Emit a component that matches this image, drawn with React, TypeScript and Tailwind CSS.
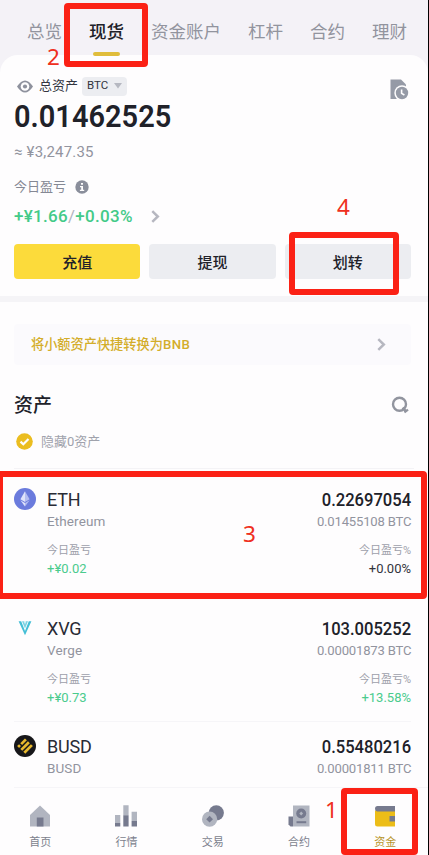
import type { ReactNode } from 'react';
import { clsx } from 'clsx';

const tabs = ['总览', '现货', '资金账户', '杠杆', '合约', '理财'];

interface Asset {
  symbol: string;
  name: string;
  amount: string;
  btc: string;
  pnl?: string;
  pnlPercent?: string;
  flat?: boolean;
  icon: ReactNode;
}

const assets: Asset[] = [
  {
    symbol: 'ETH',
    name: 'Ethereum',
    amount: '0.22697054',
    btc: '0.01455108 BTC',
    pnl: '+¥0.02',
    pnlPercent: '+0.00%',
    flat: true,
    icon: <EthIcon />,
  },
  {
    symbol: 'XVG',
    name: 'Verge',
    amount: '103.005252',
    btc: '0.00001873 BTC',
    pnl: '+¥0.73',
    pnlPercent: '+13.58%',
    icon: <VergeIcon />,
  },
  {
    symbol: 'BUSD',
    name: 'BUSD',
    amount: '0.55480216',
    btc: '0.00001811 BTC',
    icon: <BusdIcon />,
  },
];

const navItems = [
  { label: '首页', icon: <HomeIcon /> },
  { label: '行情', icon: <MarketIcon /> },
  { label: '交易', icon: <TradeIcon /> },
  { label: '合约', icon: <FuturesIcon /> },
  { label: '资金', icon: <WalletIcon />, active: true },
];

function EthIcon() {
  return (
    <svg width="22" height="22" viewBox="0 0 22 22">
      <circle cx="11" cy="11" r="11" fill="#6b7bdd" />
      <path d="M11 3.2 L6.4 11.2 L11 13.9Z" fill="#dfe3fa" />
      <path d="M11 3.2 L15.6 11.2 L11 13.9Z" fill="#b4bdf0" />
      <path d="M6.4 12.3 L11 18.5 V15Z" fill="#dfe3fa" />
      <path d="M15.6 12.3 L11 18.5 V15Z" fill="#b4bdf0" />
    </svg>
  );
}

function VergeIcon() {
  return (
    <svg width="22" height="22" viewBox="0 0 22 22">
      <path d="M4.6 4.2 H7.2 L11 14 L14.8 4.2 H17.4 L11 18.2Z" fill="#45bfd6" />
      <path d="M8 4.2 H14 L11 11.6Z" fill="#7dd3e3" />
      <path d="M10 4.2 H12 L11 7.5Z" fill="#fefdfe" />
    </svg>
  );
}

function BusdIcon() {
  return (
    <svg width="22" height="22" viewBox="0 0 22 22">
      <circle cx="11" cy="11" r="11" fill="#17171a" />
      <g stroke="#e8b92e" strokeWidth="2.7">
        <path d="M7.2 9.1 L11.9 4.4" />
        <path d="M7.3 14.9 L14.9 7.3" />
        <path d="M10.3 17.7 L17.9 10.1" />
        <path d="M4.1 12 L6 10.1" />
      </g>
    </svg>
  );
}

function HomeIcon() {
  return (
    <svg width="22" height="22" viewBox="0 0 22 22">
      <path d="M11 .5 L21 10 V21.5 H1 V10Z" fill="#b1b5c0" />
      <path d="M7.8 12.5 H14.5 V21.5 H7.8Z" fill="#767a8e" />
    </svg>
  );
}

function MarketIcon() {
  return (
    <svg width="22" height="22" viewBox="0 0 22 22">
      <path d="M0 10 H5.3 V18 H0Z M8.3 .3 H13.6 V10.3 H8.3Z M16.6 6.8 H22 V16 H16.6Z" fill="#b1b5c0" />
      <path d="M0 18 H5.3 V21.5 H0Z M8.3 10.3 H13.6 V21.5 H8.3Z M16.6 16 H22 V21.5 H16.6Z" fill="#767a8e" />
    </svg>
  );
}

function TradeIcon() {
  return (
    <svg width="22" height="22" viewBox="0 0 22 22">
      <circle cx="14.3" cy="7.8" r="7.6" fill="#767a8e" />
      <circle cx="7.6" cy="14.2" r="7.6" fill="#b1b5c0" />
      <path d="M7.6 10.8 L11 14.2 L7.6 17.6 L4.2 14.2Z" fill="#767a8e" />
    </svg>
  );
}

function FuturesIcon() {
  return (
    <svg width="22" height="22" viewBox="0 0 22 22">
      <path d="M5 .5 H21.5 V21.5 H5Z" fill="#b1b5c0" />
      <path d="M.5 11.5 H5 V21.5 H2.5 L.5 19.5Z" fill="#767a8e" />
      <circle cx="13.2" cy="8.5" r="5" fill="#767a8e" />
      <path d="M13.2 6.6 L15.1 8.5 L13.2 10.4 L11.3 8.5Z" fill="#b1b5c0" />
      <path d="M8.5 16.2 H18.2 V18.2 H8.5Z" fill="#767a8e" />
    </svg>
  );
}

function WalletIcon() {
  return (
    <svg width="22" height="22" viewBox="0 0 22 22">
      <path d="M1 5.5 H21 V21.5 H3.5 Q1 21.5 1 19Z" fill="#ecbd18" />
      <path d="M3.5 1 H21 V6.6 H3.2 Q1 6.2 1 3.8 Q1 1 3.5 1Z" fill="#767a8e" />
      <path d="M15.5 11 H21 V16.5 H15.5Z" fill="#767a8e" />
    </svg>
  );
}

function EyeIcon() {
  return (
    <svg width="16" height="13" viewBox="0 0 16 13">
      <path d="M0 6.5 Q4 .5 8 .5 Q12 .5 16 6.5 Q12 12.5 8 12.5 Q4 12.5 0 6.5Z" fill="#8e919d" />
      <circle cx="8" cy="6.5" r="4.3" fill="#fefdfe" />
      <circle cx="8" cy="6.5" r="2.1" fill="#8e919d" />
    </svg>
  );
}

function HistoryIcon() {
  return (
    <svg width="19" height="21" viewBox="0 0 19 21">
      <path d="M.5 .5 H11 L16 5.5 V20 H.5Z" fill="#959aa6" />
      <circle cx="12" cy="14" r="7.7" fill="#fefdfe" />
      <circle cx="12" cy="14" r="6.2" fill="#959aa6" />
      <path d="M11.6 10.5 V14.4 L14.4 16" stroke="#fefdfe" strokeWidth="1.6" fill="none" />
    </svg>
  );
}

function InfoIcon() {
  return (
    <svg width="14" height="14" viewBox="0 0 14 14">
      <circle cx="7" cy="7" r="6.7" fill="#8a8e9b" />
      <path d="M6 3 H8 V4.8 H6Z M5 6 H8 V9.7 H9.2 V11 H4.9 V9.7 H6.2 V7.2 H5Z" fill="#fefdfe" />
    </svg>
  );
}

function Chevron() {
  return (
    <svg width="9" height="13" viewBox="0 0 9 13">
      <path d="M1.3 1.2 L6.8 6.5 L1.3 11.8" fill="none" stroke="#b6b7c0" strokeWidth="2.5" />
    </svg>
  );
}

function SearchIcon() {
  return (
    <svg width="18" height="18" viewBox="0 0 18 18">
      <circle cx="8.5" cy="8.3" r="6.5" fill="none" stroke="#92959f" strokeWidth="2.4" />
      <path d="M11.6 11.6 L15.2 15.6" fill="none" stroke="#92959f" strokeWidth="2.6" />
      <path d="M13.4 16.4 L17 13.6" fill="none" stroke="#92959f" strokeWidth="2.2" />
    </svg>
  );
}

function CheckIcon() {
  return (
    <svg width="17" height="17" viewBox="0 0 17 17">
      <circle cx="8.5" cy="8.5" r="8.3" fill="#ebbd20" />
      <path d="M4.5 8.6 L7.3 11.3 L12.5 6" fill="none" stroke="#fefdfe" strokeWidth="2.2" />
    </svg>
  );
}

function AssetRow({ asset }: { asset: Asset }) {
  return (
    <div className="flex">
      <div className="w-[33px] shrink-0">{asset.icon}</div>
      <div className="flex-1">
        <div className="flex h-[22px] items-center justify-between pt-[2px] leading-[22px]">
          <span className="text-[18px] tracking-[-0.2px] text-[#292b35]">{asset.symbol}</span>
          <span className="origin-right scale-x-92 text-[18px] font-medium text-[#202129]">{asset.amount}</span>
        </div>
        <div className="flex h-[23px] items-center justify-between text-[13.5px] text-[#92949f]">
          <span className="tracking-[0.1px]">{asset.name}</span>
          <span className="origin-right scale-x-97 tracking-[-0.2px]">{asset.btc}</span>
        </div>
        {asset.pnl && (
          <>
            <div className="mt-[9px] flex h-[20px] items-center justify-between text-[11px] text-[#9d9faa]">
              <span>今日盈亏</span>
              <span>今日盈亏%</span>
            </div>
            <div className="flex h-[15px] items-center justify-between text-[13px] text-[#4bcb8d]">
              <span>{asset.pnl}</span>
              <span className={clsx(asset.flat && 'text-[#33343c]')}>{asset.pnlPercent}</span>
            </div>
          </>
        )}
      </div>
    </div>
  );
}

function Mark({ className, children }: { className: string; children: string }) {
  return (
    <span className={clsx('absolute font-["Noto_Sans"] text-[22.5px] leading-6 text-[#ef2f20]', className)}>
      {children}
    </span>
  );
}

export default function App() {
  return (
    <div className="relative flex h-[855px] w-[429px] flex-col overflow-hidden border-r border-black bg-[#fefdfe] font-[Roboto,'Noto_Sans_CJK_SC',sans-serif]">
      <div className="bg-[#f4f2f7]">
        <nav className="flex h-[55px] gap-[27px] whitespace-nowrap pl-[27px] pt-[19px] text-[17.5px] leading-[26px] text-[#92949e]">
          {tabs.map((tab) => (
            <div key={tab} className={clsx('flex flex-col items-center', tab === '现货' && 'font-medium text-[#202129]')}>
              <span>{tab}</span>
              {tab === '现货' && <div className="mt-[7px] h-1 w-[27px] shrink-0 rounded-xs bg-[#e0bd3b]" />}
            </div>
          ))}
        </nav>
        <div className="h-5 rounded-t-[18px] bg-[#fefdfe]" />
      </div>

      {/* Balance */}
      <section className="flex h-[221px] flex-col px-[14px]">
        <div className="flex h-[22px] items-center justify-between">
          <div className="flex items-center text-[13px] text-[#33353f]">
            <span className="ml-[3px] mr-[6px]"><EyeIcon /></span>
            <span>总资产</span>
            <div className="ml-1 flex h-[19px] w-[45px] items-center gap-[6px] rounded-sm bg-[#ecedf1] pl-[5px] text-[11.5px] leading-none">
              <span>BTC</span>
              <svg width="8" height="6" viewBox="0 0 8 6"><path d="M0 0 H8 L4 5.5Z" fill="#b6b8c1" /></svg>
            </div>
          </div>
          <div className="mr-[5px] mt-[7px]"><HistoryIcon /></div>
        </div>
        <div className="h-[40px] w-fit origin-left scale-x-92 text-[31.5px] font-semibold leading-[40px] text-[#202129]">0.01462525</div>
        <div className="h-[30px] text-[15px] leading-[31px] tracking-[0.2px] text-[#92949f]">≈ ¥3,247.35</div>
        <div className="flex h-[40px] items-center gap-[9px] text-[13px] text-[#858894]">
          <span>今日盈亏</span>
          <InfoIcon />
        </div>
        <div className="flex h-[18px] items-center text-[17px] font-medium leading-[18px] tracking-[0.3px] text-[#43ca88]">
          <span>+¥1.66<span className="font-normal text-[#b2b4be]">/</span>+0.03%</span>
          <span className="ml-[18px]"><Chevron /></span>
        </div>
        <div className="mt-[19px] grid h-[35px] w-[397px] grid-cols-3 gap-[9px] text-[15px] font-medium text-[#202129]">
          <button className="rounded bg-[#fcdb3b] pt-[3px]">充值</button>
          <button className="rounded bg-[#ecedf1] pt-[3px]">提现</button>
          <button className="rounded bg-[#ecedf1] pt-[3px]">划转</button>
        </div>
      </section>
      <div className="h-[6px] shrink-0 bg-[#f5f4f7]" />

      {/* Asset list */}
      <section className="flex h-[486px] flex-col px-[14px] pt-[22px]">
        <div className="flex h-[41px] w-[397px] shrink-0 items-center justify-between rounded bg-[#fbfafd] pl-[17px] pr-[25px] text-[13.2px] font-medium text-[#d3ad2a]">
          <span className="pt-[2px]">将小额资产快捷转换为<span className="tracking-[0.5px]">BNB</span></span>
          <Chevron />
        </div>
        <div className="mt-[25px] flex h-[30px] items-center justify-between text-[19px] font-medium leading-[30px] text-[#202129]">
          <span className="pt-[2px]">资产</span>
          <span className="mr-[5px] mt-[1px]"><SearchIcon /></span>
        </div>
        <div className="mt-[12px] flex h-[20px] items-center gap-[8px] pl-[2px] text-[13px] leading-5 text-[#a0a2ac]">
          <CheckIcon />
          <span className="pt-[1px]">隐藏0资产</span>
        </div>
        <div className="mt-[16px] h-px shrink-0 bg-[#f4f3f6]" />
        <div className="mt-[19px] w-[397px]">
          <div className="h-[129px]"><AssetRow asset={assets[0]} /></div>
          <div className="h-[105px] border-b border-[#f6f5f8]"><AssetRow asset={assets[1]} /></div>
          <div className="pt-[13px]"><AssetRow asset={assets[2]} /></div>
        </div>
      </section>

      <div className="ml-[14px] h-px shrink-0 bg-[#f6f5f8]" />
      <nav className="-ml-[3px] grid h-[67px] shrink-0 grid-cols-[repeat(5,86.3px)] pt-[17px] text-[11px] leading-4 text-[#7c7f8d]">
        {navItems.map((item) => (
          <div key={item.label} className={clsx('flex flex-col items-center gap-2', item.active && 'text-[#b8952c]')}>
            {item.icon}
            <span>{item.label}</span>
          </div>
        ))}
      </nav>

      {/* Step markers */}
      <div className="absolute left-[64px] top-[3px] h-[64px] w-[84px] rounded border-[6px] border-[#fb2115]" />
      <Mark className="left-[47px] top-[45px]">2</Mark>
      <div className="absolute left-[289px] top-[232px] h-[63px] w-[110px] rounded border-[6px] border-[#fb2115]" />
      <Mark className="left-[337px] top-[195px]">4</Mark>
      <div className="absolute -left-[3px] top-[471px] h-[128px] w-[430px] rounded border-[6px] border-[#fb2115]" />
      <Mark className="left-[243px] top-[522px]">3</Mark>
      <div className="absolute left-[341px] top-[788px] h-[67px] w-[77px] rounded border-[6px] border-[#fb2115]" />
      <Mark className="left-[325px] top-[798px]">1</Mark>
    </div>
  );
}
